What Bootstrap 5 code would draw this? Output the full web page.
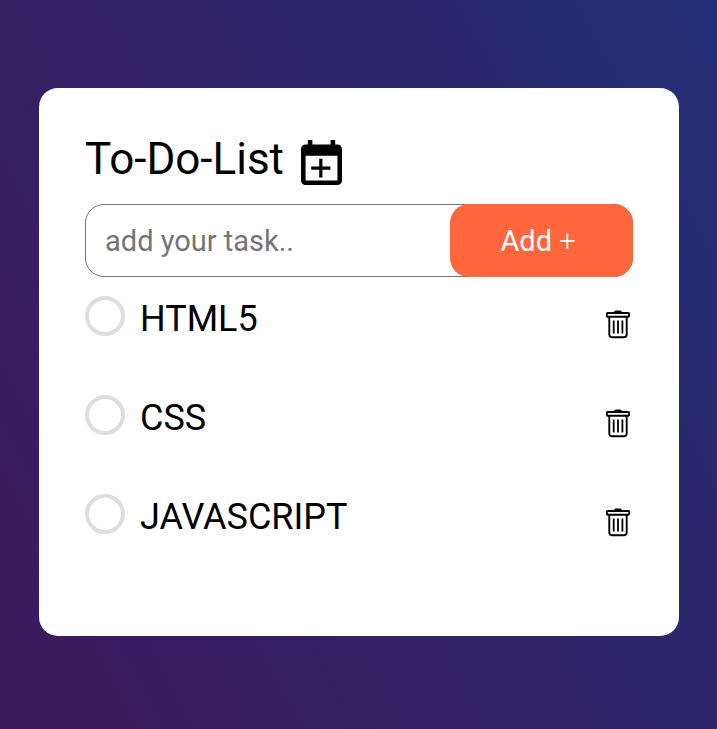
<!DOCTYPE html>
<html lang="en">
<head>
<meta charset="utf-8">
<meta name="viewport" content="width=device-width, initial-scale=1">
<title>To-Do-List</title>
<link rel="stylesheet" href="https://cdn.jsdelivr.net/npm/bootstrap@5.3.0/dist/css/bootstrap.min.css">
<style>
  body {
    font-family: Roboto, "Liberation Sans", sans-serif;
    background: linear-gradient(62deg, #3d195c, #2f256a 60%, #223077) no-repeat fixed;
    color: #000;
  }
  .todo-page { padding: 88px 38px 88px 39px; }
  .todo-card { border-radius: 19px; padding: 44px 46px 43px; }
  .todo-title { font-size: 44px; line-height: 54px; gap: 17px; margin-bottom: 18px; }
  .todo-title svg { width: 41px; height: 45px; margin-top: 8px; }
  .task-entry { border: 1px solid #767676; border-radius: 19px; background: #fff; }
  .task-entry input { font-size: 29px; line-height: 36px; padding: 18px 19px 17px; min-width: 0; color: #000; outline: 0; }
  .task-entry input::placeholder { color: #757575; opacity: 1; }
  .add-btn {
    width: 183px; margin: -1px; padding: 0 7px 0 0; border-radius: 19px; background: #ff663c;
    color: #fff; font-size: 29px; line-height: 36px;
  }
  .add-btn:hover { background: #f05a30; color: #fff; }
  .add-btn span { font-weight: 300; }
  .task-list { padding-top: 19px; }
  .task-item { min-height: 99px; }
  .task-item label { font-size: 36px; line-height: 46px; padding-left: 15px; }
  .task-check {
    appearance: none; width: 40px; height: 40px; margin: 0;
    border: 4px solid #dedede; border-radius: 50%;
  }
  .task-check:checked { background: #ff663c; border-color: #ff663c; }
  .task-delete { margin: 14px 3px 0 0; color: #000; }
  .task-delete svg { width: 24px; height: 29px; }
</style>
<script src="https://cdn.jsdelivr.net/npm/bootstrap@5.3.0/dist/js/bootstrap.bundle.min.js" defer></script>
</head>
<body class="min-vh-100">
<svg class="d-none" aria-hidden="true">
  <symbol id="trash" viewBox="0 0 24 29" preserveAspectRatio="none">
    <g fill="none" stroke="currentColor" stroke-width="1.9" stroke-linejoin="round">
      <rect x="0.9" y="3" width="22.2" height="3.8" rx="1"/>
      <path d="M3.3 7v17.6a2.6 2.6 0 0 0 2.6 2.6h12.2a2.6 2.6 0 0 0 2.6-2.6V7"/>
      <path d="M7.7 10.5v13M12 10.5v13M16.4 10.5v13" stroke-width="1.8"/>
    </g>
    <path d="M8 2.6q.3-2 1.8-2h4.4q1.5 0 1.8 2z" fill="currentColor"/>
  </symbol>
</svg>
<main class="todo-page">
  <section class="todo-card bg-white">
    <h1 class="todo-title d-flex align-items-start fw-normal">To-Do-List
      <svg viewBox="3 2 18 20" preserveAspectRatio="none" fill="currentColor" aria-hidden="true">
        <path fill-rule="evenodd" d="M6 2h2v2h8V2h2v2h1a2 2 0 0 1 2 2v14a2 2 0 0 1-2 2H5a2 2 0 0 1-2-2V6a2 2 0 0 1 2-2h1zM5 9v11h14V9z"/>
        <path d="M11 10.3h1.4v3.5h3.5v1.4h-3.5v3.5H11v-3.5H7.5v-1.4H11z"/>
      </svg>
    </h1>
    <form class="task-entry d-flex">
      <input type="text" class="flex-grow-1 border-0 bg-transparent" placeholder="add your task.." aria-label="Add your task">
      <button type="button" class="btn add-btn border-0 flex-shrink-0">Add <span>+</span></button>
    </form>
    <ul class="task-list list-unstyled mb-0">
      <li class="task-item d-flex align-items-start">
        <input type="checkbox" class="task-check flex-shrink-0" id="task-html">
        <label for="task-html" class="flex-grow-1">HTML5</label>
        <button type="button" class="task-delete btn border-0 p-0 d-flex" aria-label="Delete HTML5"><svg><use href="#trash"/></svg></button>
      </li>
      <li class="task-item d-flex align-items-start">
        <input type="checkbox" class="task-check flex-shrink-0" id="task-css">
        <label for="task-css" class="flex-grow-1">CSS</label>
        <button type="button" class="task-delete btn border-0 p-0 d-flex" aria-label="Delete CSS"><svg><use href="#trash"/></svg></button>
      </li>
      <li class="task-item d-flex align-items-start">
        <input type="checkbox" class="task-check flex-shrink-0" id="task-js">
        <label for="task-js" class="flex-grow-1">JAVASCRIPT</label>
        <button type="button" class="task-delete btn border-0 p-0 d-flex" aria-label="Delete JAVASCRIPT"><svg><use href="#trash"/></svg></button>
      </li>
    </ul>
  </section>
</main>
</body>
</html>
